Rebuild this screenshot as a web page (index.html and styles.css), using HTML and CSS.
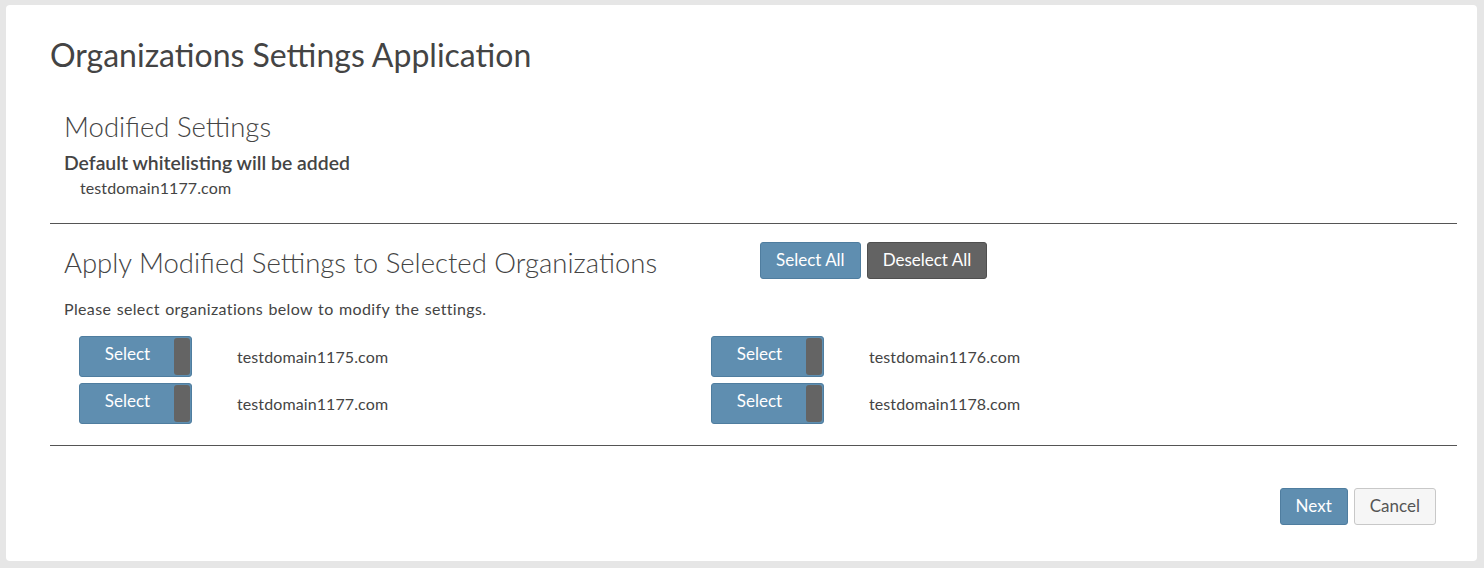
FILE: index.html
```html
<!DOCTYPE html>
<html lang="en">
<head>
    <meta charset="UTF-8">
    <title>Organizations Settings Application</title>
    <link rel="stylesheet" href="styles.css">
</head>
<body>
    <div class="card">
        <h1 class="page-title">Organizations Settings Application</h1>

        <section class="modified">
            <h2>Modified Settings</h2>
            <h3>Default whitelisting will be added</h3>
            <div class="domain-item">testdomain1177.com</div>
        </section>

        <hr class="divider">

        <section class="apply">
            <div class="apply-head">
                <h2>Apply Modified Settings to Selected Organizations</h2>
                <div class="bulk-buttons">
                    <button class="btn btn-blue">Select All</button>
                    <button class="btn btn-gray">Deselect All</button>
                </div>
            </div>
            <p class="hint">Please select organizations below to modify the settings.</p>

            <div class="org-grid">
                <div class="org-row">
                    <button class="toggle"><span class="toggle-label">Select</span><span class="toggle-knob"></span></button>
                    <span class="org-name">testdomain1175.com</span>
                </div>
                <div class="org-row">
                    <button class="toggle"><span class="toggle-label">Select</span><span class="toggle-knob"></span></button>
                    <span class="org-name">testdomain1176.com</span>
                </div>
                <div class="org-row">
                    <button class="toggle"><span class="toggle-label">Select</span><span class="toggle-knob"></span></button>
                    <span class="org-name">testdomain1177.com</span>
                </div>
                <div class="org-row">
                    <button class="toggle"><span class="toggle-label">Select</span><span class="toggle-knob"></span></button>
                    <span class="org-name">testdomain1178.com</span>
                </div>
            </div>
        </section>

        <hr class="divider">

        <div class="footer-buttons">
            <button class="btn btn-blue">Next</button>
            <button class="btn btn-light">Cancel</button>
        </div>
    </div>
</body>
</html>
```

FILE: styles.css
```css
/* Base */
html, body {
    margin: 0;
    padding: 0;
}

body {
    background-color: #e6e6e6;
    font-family: Lato, "Open Sans", Arial, sans-serif;
    color: #444;
    padding: 5px 7px 7px 6px;
}

.card {
    background: #fff;
    border-radius: 4px;
    height: 556px;
    box-sizing: border-box;
    padding: 30px 20px 0 44px;
}

.page-title {
    margin: 0;
    font-size: 32px;
    font-weight: 400;
    line-height: 40px;
    color: #444;
}

/* Sections */
section {
    padding: 0 14px;
}

section h2 {
    margin: 0;
    font-weight: 300;
    font-size: 27.5px;
    color: #444;
}

.modified {
    padding-top: 37px;
}

.modified h2 {
    line-height: 30px;
}

.modified h3 {
    margin: 9px 0 0;
    font-size: 19.4px;
    font-weight: 600;
    line-height: 24px;
}

.domain-item {
    padding: 1px 0 0 16px;
    font-size: 16px;
    letter-spacing: 0.1px;
    line-height: 24px;
}

.divider {
    border: none;
    border-top: 1px solid #555;
    margin: 0;
}

.modified + .divider {
    margin-top: 23px;
}

/* Apply section */
.apply {
    padding-top: 16px;
}

.apply-head {
    display: flex;
    align-items: flex-start;
}

.apply-head h2 {
    width: 696px;
    line-height: 46px;
}

.bulk-buttons {
    display: flex;
    gap: 6px;
    padding-top: 2px;
}

.btn {
    font-family: inherit;
    font-size: 17px;
    height: 37px;
    padding: 0 15px 3px;
    border-radius: 3px;
    border: 1px solid transparent;
    cursor: pointer;
}

.btn-blue {
    background: #5f8eb0;
    border-color: #4f7d9f;
    color: #fff;
}

.btn-gray {
    background: #636363;
    border-color: #4f4f4f;
    color: #fff;
}

.btn-light {
    background: #f6f6f6;
    border-color: #c8c8c8;
    color: #555;
}

.hint {
    margin: 13px 0 0;
    font-size: 16px;
    letter-spacing: 0.35px;
    word-spacing: 1px;
    line-height: 20px;
}

/* Organization toggles */
.org-grid {
    display: grid;
    grid-template-columns: 632px 1fr;
    row-gap: 6px;
    padding: 17px 0 21px 15px;
}

.org-row {
    display: flex;
    align-items: center;
}

.toggle {
    display: flex;
    align-items: stretch;
    width: 113px;
    height: 41px;
    padding: 1px;
    background: #5f8eb0;
    border: 1px solid #4f7d9f;
    border-radius: 3px;
    cursor: pointer;
    font-family: inherit;
}

.toggle-label {
    flex: 1;
    color: #fff;
    font-size: 17px;
    line-height: 31px;
    text-align: center;
}

.toggle-knob {
    width: 16px;
    background: #646464;
    border-radius: 3px;
}

.org-name {
    margin-left: 45px;
    font-size: 16px;
    letter-spacing: 0.1px;
}

/* Footer */
.footer-buttons {
    display: flex;
    justify-content: flex-end;
    gap: 6px;
    padding: 42px 21px 0 0;
}

.footer-buttons .btn {
    height: 37px;
}
```
